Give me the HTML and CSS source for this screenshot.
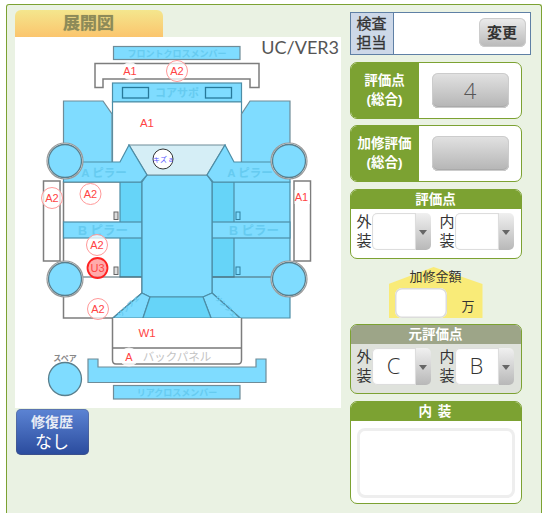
FILE: index.html
```html
<!DOCTYPE html>
<html lang="ja">
<head>
<meta charset="utf-8">
<title>展開図</title>
<link rel="stylesheet" href="styles.css">
</head>
<body>
<div class="frame">
  <div class="left">
    <div class="title">展開図</div>
    <svg class="diagram" viewBox="15 37 326 371" width="326" height="371">
      <rect class="bg" x="15" y="37" width="326" height="371"/>
      <rect class="blue grey" x="113.5" y="46.5" width="126.5" height="13"/>
      <path class="white grey2" d="M95 63.5H259V87.500H250V79H103V87.500H95Z"/>
      <rect class="blue dark" x="112.500" y="83" width="129" height="19"/>
      <rect class="blue darker" x="122.500" y="87.500" width="26" height="10.500"/>
      <rect class="blue darker" x="205.500" y="87.500" width="26" height="10.500"/>
      <path class="white dark" d="M112.500 102H241.500V170H112.500Z"/>
      <path class="blue grey" d="M63.500 101H103L112 114V165H63.500Z"/>
      <path class="blue grey" d="M290 101H250L241.500 114V165H290Z"/>
      <path class="white grey2" d="M63.500 182H142V293L113 318H63.500Z"/>
      <path class="blue dark" d="M212 182H290V318H240L212 293Z"/>
      <rect class="deep dark" x="120" y="182" width="22" height="95"/>
      <rect class="deep dark" x="212" y="182" width="22" height="95"/>
      <path class="line" d="M63.500 277H142M212 277H273"/>
      <rect class="blue dark" x="63.500" y="222" width="78.500" height="16"/>
      <rect class="blue dark" x="212" y="222" width="78" height="16"/>
      <rect class="handle" x="114" y="212" width="4" height="7.500"/>
      <rect class="handle" x="114" y="267" width="4" height="7.500"/>
      <rect class="handle2" x="236" y="212" width="4" height="7.500"/>
      <rect class="handle2" x="236" y="267" width="4" height="7.500"/>
      <path class="blue dark" d="M147 175H207L212 182V293L203 297H150L142 293V182Z"/>
      <path class="pale grey" d="M129 145H225L207 175H147Z"/>
      <path class="blue dark" d="M80 162H120L129 145L147 175L141 182H63.500V165Z"/>
      <path class="blue dark" d="M274 162H234L225 145L207 175L213 182H290V165Z"/>
      <path class="blue dark" d="M142 293L150 297L143 318H113Z"/>
      <path class="blue dark" d="M212 293L203 297L211 318H240Z"/>
      <path class="deep dark" d="M150 297H203L211 318H143Z"/>
      <rect class="white grey2" x="43.500" y="181" width="16.500" height="80"/>
      <rect class="white grey2" x="294" y="181" width="16.500" height="80"/>
      <path class="white grey2" d="M112.500 318V360Q112.500 364 116 364H238Q241.500 364 241.500 360V318"/>
      <path class="line2" d="M112.500 348H241.500"/>
      <path class="blue grey" d="M88 359H98V367H256V359H266V382.500H88Z"/>
      <rect class="blue grey" x="113.500" y="385.500" width="126.500" height="13.500"/>
      <circle class="halo" cx="65" cy="161" r="18"/>
      <circle class="halo" cx="65" cy="279" r="18"/>
      <circle class="halo" cx="289" cy="161" r="18"/>
      <circle class="halo" cx="289" cy="279" r="18"/>
      <circle class="wheel" cx="65" cy="161" r="16.500"/>
      <circle class="wheel" cx="65" cy="279" r="16.500"/>
      <circle class="wheel" cx="289" cy="161" r="16.500"/>
      <circle class="wheel" cx="289" cy="279" r="16.500"/>
      <circle class="wheel" cx="65" cy="379" r="16.500"/>

      <text class="lbl s9" x="177" y="56.500">フロントクロスメンバー</text>
      <text class="lbl s11" x="177" y="96.500">コアサポ</text>
      <text class="lbl s12" x="104" y="177">A ピラー</text>
      <text class="lbl s12" x="250" y="177">A ピラー</text>
      <text class="lbl s13" x="103" y="235">B ピラー</text>
      <text class="lbl s13" x="254" y="235">B ピラー</text>
      <text class="lbl s9" x="177" y="396">リアクロスメンバー</text>
      <text class="lbl s7" transform="translate(130 308) rotate(-45)">リンフェ</text>
      <text class="lbl s7" transform="translate(224 308) rotate(45)">リンフェ</text>
      <text class="gray s12" x="177" y="360.500">バックパネル</text>
      <text class="gray2" x="65" y="360.500">スペア</text>

      <circle class="ghost" cx="130" cy="71" r="9"/>
      <text class="mark" x="130" y="75">A1</text>
      <circle class="ring" cx="177" cy="71" r="10.500"/>
      <text class="mark" x="177" y="75">A2</text>
      <text class="mark big" x="147" y="127">A1</text>
      <circle class="scratch" cx="163" cy="159" r="10"/>
      <text class="kizu" x="163" y="162">キズ a</text>
      <circle class="ring" cx="52" cy="198" r="10.500"/>
      <text class="mark" x="52" y="202">A2</text>
      <circle class="ring" cx="90.500" cy="194" r="10.500"/>
      <text class="mark" x="90.500" y="198">A2</text>
      <circle class="ring" cx="97" cy="245" r="10.500"/>
      <text class="mark" x="97" y="249">A2</text>
      <circle class="ring hot" cx="97.500" cy="268" r="10"/>
      <text class="mark" x="97.500" y="272">U3</text>
      <circle class="ring" cx="98" cy="309" r="10.500"/>
      <text class="mark" x="98" y="313">A2</text>
      <rect class="ghost" x="294.500" y="190" width="15.500" height="14"/>
      <text class="mark" x="301.500" y="201">A1</text>
      <text class="mark big" x="147" y="337">W1</text>
      <circle class="ghost" cx="129" cy="357" r="9.500"/>
      <text class="mark" x="129" y="361">A</text>
      <text class="ver" x="339" y="54">UC/VER3</text>
    </svg>
    <div class="repair"><b>修復歴</b><span>なし</span></div>
  </div>
  <div class="right">
    <div class="inspector">
      <div class="ins-head">検査<br>担当</div>
      <div class="ins-body"><div class="change">変更</div></div>
    </div>
    <div class="score">
      <div class="score-head">評価点<br>(総合)</div>
      <div class="score-body"><div class="bigbtn">4</div></div>
    </div>
    <div class="score">
      <div class="score-head">加修評価<br>(総合)</div>
      <div class="score-body"><div class="bigbtn"></div></div>
    </div>
    <div class="panel">
      <div class="panel-head">評価点</div>
      <div class="pair">
        <div class="slabel">外<br>装</div>
        <div class="sel"><div class="val"></div><div class="spin"></div></div>
        <div class="slabel second">内<br>装</div>
        <div class="sel"><div class="val"></div><div class="spin"></div></div>
      </div>
    </div>
    <div class="amount">
      <div class="amount-label">加修金額</div>
      <div class="amount-row"><div class="amount-input"></div><span>万</span></div>
    </div>
    <div class="panel old">
      <div class="panel-head">元評価点</div>
      <div class="pair">
        <div class="slabel">外<br>装</div>
        <div class="sel"><div class="val">C</div><div class="spin"></div></div>
        <div class="slabel second">内<br>装</div>
        <div class="sel"><div class="val">B</div><div class="spin"></div></div>
      </div>
    </div>
    <div class="panel interior">
      <div class="panel-head">内 装</div>
      <div class="memo-wrap"><div class="memo"></div></div>
    </div>
  </div>
</div>
</body>
</html>
```
FILE: styles.css
```css
html, body { margin: 0; height: 513px; overflow: hidden; background: #fff; }
body { font-family: "Liberation Sans", "Noto Sans CJK JP", sans-serif; color: #333; }
.frame {
  margin: 4px 0 0 6px; width: 536px; height: 509px; box-sizing: border-box;
  border: 1.500px solid #7ca232; border-bottom: 0; border-radius: 3px 3px 0 0; background: #eaf2e3;
  padding: 5px 0 0 7.500px; display: flex; gap: 9px;
}
.left { width: 326px; display: flex; flex-direction: column; align-items: flex-start; }
.title {
  width: 148px; height: 27px; border-radius: 6px 6px 0 0; line-height: 28px; text-align: center;
  background: linear-gradient(#f4e68d, #fbc56d); font-size: 17px; font-weight: bold; color: #8d8a58;
  text-shadow: 0 0 1px #a9a36b;
}
.diagram { display: block; }
.bg { fill: #fff; }
.blue { fill: #7fdcff; }
.white { fill: #fff; }
.pale { fill: #d5eef6; }
.deep { fill: #66d4f8; }
.grey { stroke: #6f8c98; stroke-width: 1.200; }
.grey2 { stroke: #7d7d7d; stroke-width: 1.500; }
.dark { stroke: #4c8da6; stroke-width: 1.200; }
.darker { stroke: #27799a; stroke-width: 1.300; }
.line { stroke: #4a6670; stroke-width: 1.200; fill: none; }
.line2 { stroke: #777; stroke-width: 1.300; fill: none; }
.handle { fill: #ddd; stroke: #666; stroke-width: 1; }
.handle2 { fill: #7fdcff; stroke: #2f7f9f; stroke-width: 1; }
.halo { fill: #fff; stroke: #999; stroke-width: 1.200; }
.wheel { fill: #7fdcff; stroke: #5a7f8d; stroke-width: 1.300; }
.lbl { fill: #66cbf0; font-weight: bold; text-anchor: middle; }
.gray { fill: #c4c4c4; text-anchor: middle; }
.gray2 { fill: #888; font-size: 8px; font-weight: bold; text-anchor: middle; }
.s7 { font-size: 7px; }
.s9 { font-size: 9px; }
.s11 { font-size: 11px; }
.s12 { font-size: 11.500px; }
.s13 { font-size: 12.500px; }
.ghost { fill: #fff; opacity: .85; }
.ring { fill: #fff; fill-opacity: .75; stroke: #f99; stroke-width: 1; }
.hot { fill: #f88; fill-opacity: .7; stroke: #f22; stroke-width: 1.800; }
.scratch { fill: #fff; stroke: #333; stroke-width: 1; }
.kizu { fill: #55f; font-size: 7px; text-anchor: middle; }
.mark { fill: #f44; font-size: 11px; text-anchor: middle; }
.big { font-size: 11.500px; }
.ver { fill: #555; font-family: Lato, sans-serif; font-size: 18px; text-anchor: end; }
.repair {
  margin: 1px 0 0 1px; width: 73px; height: 46px; border-radius: 5px; color: #fff; text-align: center;
  background: linear-gradient(#5c84d4, #2a4b9d); box-shadow: inset 0 0 0 1px rgba(90,90,110,.35);
  display: flex; flex-direction: column; padding-top: 4px; box-sizing: border-box;
}
.repair b { font-size: 14px; line-height: 19px; color: #e8ecf5; }
.repair span { font-size: 17px; line-height: 21px; }
.right { width: 182px; margin-top: 2px; display: flex; flex-direction: column; }
.inspector { width: 181px; height: 43px; box-sizing: border-box; border: 1px solid #5f80a5; display: flex; background: #fff; }
.ins-head {
  width: 43px; box-sizing: border-box; background: #cdd8e8; border-right: 1px solid #5f80a5; text-align: center;
  font-size: 15px; line-height: 18.500px; padding-top: 2px; color: #333; -webkit-text-stroke: .3px #333;
}
.ins-body { flex: 1; display: flex; justify-content: flex-end; padding: 5px 4px 0 0; }
.change {
  width: 47px; height: 29px; border-radius: 6px; background: linear-gradient(#ececec, #b9b9b9);
  box-shadow: inset 0 0 0 1px #ccc; text-align: center; line-height: 29px; font-size: 15px; font-weight: bold; color: #333;
}
.score {
  width: 172px; height: 57px; box-sizing: border-box; margin-top: 6.500px; display: flex;
  border: 1px solid #7ca232; border-radius: 7px; overflow: hidden; background: #fff;
}
.score-head {
  width: 68px; background: #7ca232; color: #fff; font-weight: bold; font-size: 13.500px; line-height: 19px;
  text-align: center; padding-top: 8px; box-sizing: border-box;
}
.score-body { flex: 1; padding: 10px 0 0 13px; }
.bigbtn {
  width: 77px; height: 35px; border-radius: 6px; background: linear-gradient(#e2e2e2, #b4b4b4);
  box-shadow: inset 0 0 0 1px #ccc, inset 0 -2px 0 #aaa; text-align: center; font-size: 22px; line-height: 35px; color: #555;
  font-family: "Open Sans", sans-serif; font-weight: 300;
}
.panel {
  width: 172px; height: 70px; box-sizing: border-box; margin-top: 7px; background: #fff;
  border: 1px solid #7ca232; border-radius: 7px; overflow: hidden;
}
.panel-head {
  height: 19px; background: #7ca232; color: #fff; font-weight: bold; font-size: 13.500px; line-height: 19px; text-align: center;
}
.pair { display: flex; padding: 4px 0 0 6px; align-items: flex-start; }
.slabel { width: 15px; font-size: 15px; line-height: 19px; color: #333; margin-top: -1px; }
.slabel.second { margin-left: 9px; }
.sel { width: 59px; height: 37px; display: flex; border-radius: 5px; overflow: hidden; }
.val {
  flex: 1; background: #fff; box-shadow: inset 0 0 0 1px #ddd, inset 0 0 2px #ccc; border-radius: 5px 0 0 5px;
  font-family: "Open Sans", sans-serif; font-weight: 300; font-size: 22px; line-height: 35px; text-align: center; color: #333;
}
.spin { width: 15px; background: linear-gradient(#f0f0f0, #b8b8b8); position: relative; }
.spin::after {
  content: ""; position: absolute; left: 3px; top: 17px; border: 4px solid transparent; border-top: 5px solid #666; border-bottom: 0;
}
.amount {
  width: 94px; height: 51px; margin: 8px 0 -1px 39px; position: relative;
  display: flex; flex-direction: column; align-items: center;
}
.amount::before {
  content: ""; position: absolute; inset: 0; background: #f9eb78;
  clip-path: polygon(0 17px, 48% 0, 100% 17px, 100% 100%, 0 100%);
}
.amount-label { font-size: 13px; line-height: 15px; margin-top: 2px; white-space: nowrap; position: relative; }
.amount-row { align-self: stretch; display: flex; padding: 4px 0 0 6px; position: relative; }
.amount-input { width: 52px; height: 30px; border-radius: 7px; background: #fff; box-shadow: inset 0 0 0 1.500px #dcdcdc; }
.amount-row span { font-size: 13px; margin: 8px 0 0 15px; }
.old { background: #dfe2dc; }
.old .panel-head { background: #9da588; }
.interior { height: 103px; }
.interior .panel-head { letter-spacing: 1px; }
.memo-wrap { padding: 7px 6px 0 6px; }
.memo { height: 70px; border-radius: 8px; background: #fff; box-shadow: inset 0 0 0 3px #eee; }
```
